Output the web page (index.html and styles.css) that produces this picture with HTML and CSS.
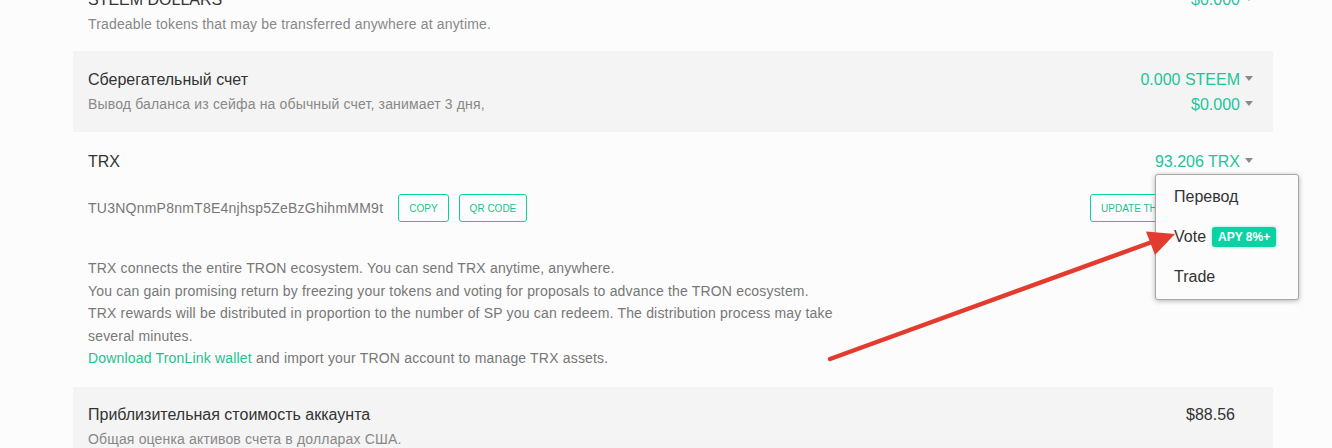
FILE: index.html
```html
<!DOCTYPE html>
<html lang="ru">
<head>
<meta charset="utf-8">
<title>Wallet</title>
<link rel="stylesheet" href="styles.css">
</head>
<body>
<div class="page">
  <div class="row">
    <div class="info">
      <div class="title">STEEM DOLLARS</div>
      <div class="desc">Tradeable tokens that may be transferred anywhere at anytime.</div>
    </div>
    <div class="values">
      <div class="amount">$0.000<span class="caret"></span></div>
    </div>
  </div>

  <div class="row gray">
    <div class="info">
      <div class="title">Сберегательный счет</div>
      <div class="desc">Вывод баланса из сейфа на обычный счет, занимает 3 дня,</div>
    </div>
    <div class="values">
      <div class="amount">0.000 STEEM<span class="caret"></span></div>
      <div class="amount">$0.000<span class="caret"></span></div>
    </div>
  </div>

  <div class="row trx">
    <div class="trx-head">
      <div class="title">TRX</div>
      <div class="values menu-anchor">
        <div class="amount">93.206 TRX<span class="caret"></span></div>
        <ul class="dropdown">
          <li>Перевод</li>
          <li>Vote <span class="badge">APY 8%+</span></li>
          <li>Trade</li>
        </ul>
      </div>
    </div>
    <div class="addr-row">
      <span class="address">TU3NQnmP8nmT8E4njhsp5ZeBzGhihmMM9t</span>
      <button class="btn btn-copy">COPY</button>
      <button class="btn">QR CODE</button>
      <button class="btn btn-update">UPDATE THE TRON ADDRESS</button>
    </div>
    <div class="trx-desc">
      TRX connects the entire TRON ecosystem. You can send TRX anytime, anywhere.<br>
      You can gain promising return by freezing your tokens and voting for proposals to advance the TRON ecosystem.<br>
      TRX rewards will be distributed in proportion to the number of SP you can redeem. The distribution process may take several minutes.<br>
      <a class="link" href="#">Download TronLink wallet</a> and import your TRON account to manage TRX assets.
    </div>
  </div>

  <div class="row gray total-row">
    <div class="info">
      <div class="title">Приблизительная стоимость аккаунта</div>
      <div class="desc">Общая оценка активов счета в долларах США.</div>
    </div>
    <div class="values">
      <div class="amount total">$88.56</div>
    </div>
  </div>
</div>

<svg class="arrow" width="1332" height="448" viewBox="0 0 1332 448" xmlns="http://www.w3.org/2000/svg">
  <line x1="830" y1="359" x2="1152" y2="242" stroke="#e33b2e" stroke-width="4.5" stroke-linecap="round"/>
  <polygon points="1175,234 1146,231.5 1155,255" fill="#e33b2e"/>
</svg>
</body>
</html>
```

FILE: styles.css
```css
* {
  box-sizing: border-box;
}

html, body {
  margin: 0;
  padding: 0;
  background: #fcfcfc;
  font-family: "Liberation Sans", Arial, sans-serif;
  color: #333;
  overflow: hidden;
}

.page {
  position: relative;
  width: 1200px;
  margin: -29px 0 0 73px;
}

.row {
  display: flex;
  justify-content: space-between;
  padding: 17px 20px 15px 15px;
  background: #fcfcfc;
}

.row.gray {
  background: #f4f4f4;
}

.row.trx {
  display: block;
  padding-top: 18px;
  padding-bottom: 17px;
}

.row.total-row {
  padding-top: 16px;
}

.title {
  font-size: 16px;
  line-height: 24px;
  color: #333;
}

.desc {
  font-size: 14px;
  line-height: 24px;
  color: #888;
  letter-spacing: 0.16px;
}

.values {
  display: flex;
  flex-direction: column;
  align-items: flex-end;
  gap: 1px;
}

.amount {
  font-size: 16px;
  line-height: 24px;
  color: #1ec49b;
  display: flex;
  align-items: center;
}

.amount.total {
  color: #333;
  margin-right: 18px;
}

.caret {
  display: inline-block;
  width: 0;
  height: 0;
  margin-left: 5px;
  margin-top: -4px;
  border-left: 4.5px solid transparent;
  border-right: 4.5px solid transparent;
  border-top: 5px solid #8a8a8a;
}

.trx-head {
  display: flex;
  justify-content: space-between;
}

.menu-anchor {
  position: relative;
}

.dropdown {
  position: absolute;
  top: 24px;
  right: -46px;
  z-index: 5;
  width: 144px;
  margin: 0;
  padding: 2px 0;
  list-style: none;
  background: #fcfcfc;
  border: 1px solid #a8a8a8;
  border-radius: 3px;
  box-shadow: 0 1px 5px rgba(0, 0, 0, 0.3);
}

.dropdown li {
  display: flex;
  align-items: center;
  height: 40px;
  padding: 0 18px;
  font-size: 16px;
  color: #333;
  white-space: nowrap;
}

.badge {
  display: inline-block;
  margin-left: 6px;
  height: 20px;
  padding: 0 6px;
  line-height: 20px;
  font-size: 12px;
  font-weight: bold;
  color: #fff;
  background: #0ad3a3;
  border-radius: 3px;
  box-shadow: 0 0 3px rgba(10, 211, 163, 0.5);
}

.addr-row {
  display: flex;
  align-items: center;
  margin-top: 20px;
  height: 28px;
}

.address {
  font-size: 14px;
  color: #777;
  margin-right: 15px;
  letter-spacing: 0.24px;
}

.btn {
  height: 28px;
  padding: 0 10px;
  font-family: "Liberation Sans", Arial, sans-serif;
  font-size: 10px;
  color: #1fbf8f;
  background: transparent;
  border: 1px solid #07d4a4;
  border-radius: 3px;
  margin-right: 10px;
}

.btn-update {
  margin-left: auto;
  margin-right: -3px;
}

.trx-desc {
  margin-top: 35px;
  max-width: 760px;
  font-size: 14px;
  line-height: 22.5px;
  color: #777;
  letter-spacing: 0.18px;
}

.link {
  color: #1fbf8f;
  text-decoration: none;
}

.arrow {
  position: absolute;
  top: 0;
  left: 0;
  z-index: 10;
  pointer-events: none;
}
```
